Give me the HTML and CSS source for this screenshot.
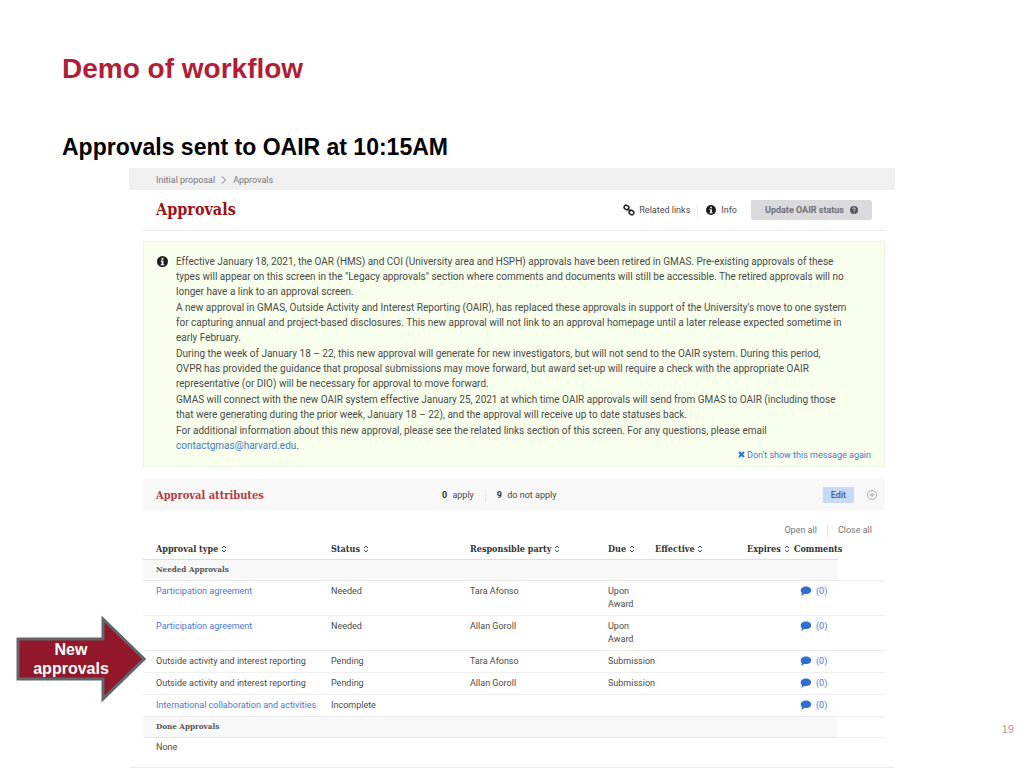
FILE: index.html
```html
<!DOCTYPE html>
<html lang="en">
<head>
    <meta charset="UTF-8">
    <meta name="viewport" content="width=device-width, initial-scale=1.0">
    <title>Demo of workflow</title>
    <link rel="stylesheet" href="styles.css">
</head>
<body>
    <svg class="sprite" aria-hidden="true">
        <symbol id="info" viewBox="0 0 12 12">
            <circle cx="6" cy="6" r="6" fill="#1c1c1c"/>
            <path d="M5 2h2v2H5zM4 5h3v4h1v1H4V9h1V6H4z" fill="#fff"/>
        </symbol>
        <symbol id="sort" viewBox="0 0 6 8">
            <path d="M1 3l2-2 2 2M1 5l2 2 2-2" fill="none" stroke="#3f5560"/>
        </symbol>
        <symbol id="comment" viewBox="0 0 12 10">
            <path d="M6 0.5c3 0 5.2 1.7 5.2 3.8S9 8.100 6 8.100c-.6 0-1.200-.1-1.700-.2C3.400 8.800 2.200 9.400.9 9.500c.6-.6 1-1.400 1.100-2.300C1 6.500.7 5.500.7 4.300.7 2.200 3 .5 6 .5z" fill="#2f6fd0"/>
        </symbol>
    </svg>

    <main class="slide">
        <h1>Demo of workflow</h1>
        <h2>Approvals sent to OAIR at 10:15AM</h2>

        <div class="screen">
            <nav class="breadcrumb">
                <span>Initial proposal</span>
                <svg width="6" height="8" viewBox="0 0 6 8"><path d="M1 0.5l3.500 3.500L1 7.500" fill="none" stroke="#777"/></svg>
                <span>Approvals</span>
            </nav>

            <div class="page">
                <header class="page-header">
                    <h3>Approvals</h3>
                    <a href="#" class="tool">
                        <svg width="12" height="12" viewBox="0 0 12 12" fill="none" stroke="#222" stroke-width="1.500">
                            <rect x="1" y="1.500" width="5" height="4" rx="2" transform="rotate(35 3.500 3.500)"/>
                            <rect x="6" y="6.500" width="5" height="4" rx="2" transform="rotate(35 8.500 8.500)"/>
                            <path d="M4.500 4.500l3 3"/>
                        </svg>
                        Related links
                    </a>
                    <a href="#" class="tool info-tool">
                        <svg width="10" height="10"><use href="#info"/></svg>
                        Info
                    </a>
                    <button class="update">
                        Update OAIR status
                        <svg width="8" height="8" viewBox="0 0 8 8">
                            <circle cx="4" cy="4" r="4" fill="#555"/>
                            <path d="M2.700 3c0-1.700 2.700-1.600 2.600-.1C5.300 3.800 4 3.800 4 4.800M4 5.500v1" fill="none" stroke="#dcdcde"/>
                        </svg>
                    </button>
                </header>

                <section class="notice">
                    <svg width="11" height="11"><use href="#info"/></svg>
                    <div class="notice-text">
                        <p>Effective January 18, 2021, the OAR (HMS) and COI (University area and HSPH) approvals have been retired in GMAS. Pre-existing approvals of these types will appear on this screen in the "Legacy approvals" section where comments and documents will still be accessible. The retired approvals will no longer have a link to an approval screen.</p>
                        <p>A new approval in GMAS, Outside Activity and Interest Reporting (OAIR), has replaced these approvals in support of the University's move to one system for capturing annual and project-based disclosures. This new approval will not link to an approval homepage until a later release expected sometime in early February.</p>
                        <p>During the week of January 18 – 22, this new approval will generate for new investigators, but will not send to the OAIR system. During this period, OVPR has provided the guidance that proposal submissions may move forward, but award set-up will require a check with the appropriate OAIR representative (or DIO) will be necessary for approval to move forward.</p>
                        <p>GMAS will connect with the new OAIR system effective January 25, 2021 at which time OAIR approvals will send from GMAS to OAIR (including those that were generating during the prior week, January 18 – 22), and the approval will receive up to date statuses back.</p>
                        <p>For additional information about this new approval, please see the related links section of this screen. For any questions, please email <a href="mailto:contactgmas@harvard.edu">contactgmas@harvard.edu</a>.</p>
                    </div>
                    <a href="#" class="dismiss">
                        <svg width="7" height="7" viewBox="0 0 7 7"><path d="M1 1l5 5M6 1L1 6" stroke="#2f6fd0" stroke-width="2"/></svg>
                        Don't show this message again
                    </a>
                </section>

                <section class="attributes">
                    <h4>Approval attributes</h4>
                    <span class="count"><b>0</b> apply</span>
                    <span class="count"><b>9</b> do not apply</span>
                    <button class="edit">Edit</button>
                    <button class="expand" aria-label="Expand">
                        <svg width="10" height="10" viewBox="0 0 10 10" fill="none" stroke="#aaa"><circle cx="5" cy="5" r="4.500"/><path d="M5 2.500v5M2.500 5h5"/></svg>
                    </button>
                </section>

                <div class="toggles">
                    <a href="#">Open all</a>
                    <a href="#">Close all</a>
                </div>

                <table>
                    <colgroup>
                        <col>
                        <col class="col-status">
                        <col class="col-party">
                        <col class="col-due">
                        <col class="col-effective">
                        <col class="col-expires">
                        <col class="col-comments">
                        <col class="col-rest">
                    </colgroup>
                    <thead>
                        <tr>
                            <th>Approval type <svg width="6" height="8"><use href="#sort"/></svg></th>
                            <th>Status <svg width="6" height="8"><use href="#sort"/></svg></th>
                            <th>Responsible party <svg width="6" height="8"><use href="#sort"/></svg></th>
                            <th>Due <svg width="6" height="8"><use href="#sort"/></svg></th>
                            <th>Effective <svg width="6" height="8"><use href="#sort"/></svg></th>
                            <th>Expires <svg width="6" height="8"><use href="#sort"/></svg></th>
                            <th>Comments</th>
                            <td></td>
                        </tr>
                    </thead>
                    <tbody>
                        <tr class="group"><th colspan="7">Needed Approvals</th><td></td></tr>
                        <tr>
                            <td><a href="#">Participation agreement</a></td><td>Needed</td><td>Tara Afonso</td><td class="wrap">Upon Award</td><td></td><td></td>
                            <td class="comments"><a href="#"><svg width="12" height="10"><use href="#comment"/></svg>(0)</a></td><td></td>
                        </tr>
                        <tr>
                            <td><a href="#">Participation agreement</a></td><td>Needed</td><td>Allan Goroll</td><td class="wrap">Upon Award</td><td></td><td></td>
                            <td class="comments"><a href="#"><svg width="12" height="10"><use href="#comment"/></svg>(0)</a></td><td></td>
                        </tr>
                        <tr>
                            <td>Outside activity and interest reporting</td><td>Pending</td><td>Tara Afonso</td><td>Submission</td><td></td><td></td>
                            <td class="comments"><a href="#"><svg width="12" height="10"><use href="#comment"/></svg>(0)</a></td><td></td>
                        </tr>
                        <tr>
                            <td>Outside activity and interest reporting</td><td>Pending</td><td>Allan Goroll</td><td>Submission</td><td></td><td></td>
                            <td class="comments"><a href="#"><svg width="12" height="10"><use href="#comment"/></svg>(0)</a></td><td></td>
                        </tr>
                        <tr>
                            <td><a href="#">International collaboration and activities</a></td><td>Incomplete</td><td></td><td></td><td></td><td></td>
                            <td class="comments"><a href="#"><svg width="12" height="10"><use href="#comment"/></svg>(0)</a></td><td></td>
                        </tr>
                        <tr class="group"><th colspan="7">Done Approvals</th><td></td></tr>
                        <tr class="none"><td colspan="8">None</td></tr>
                    </tbody>
                </table>
            </div>
        </div>

        <div class="callout">
            <svg width="130" height="90" viewBox="0 0 130 90"><path d="M2 24h85V4l41 40-41 40V64H2z" fill="#93172b" stroke="#62666a" stroke-width="3"/></svg>
            <span>New approvals</span>
        </div>
        <div class="slide-number">19</div>
    </main>
</body>
</html>
```

FILE: styles.css
```css
* {
    box-sizing: border-box;
}

body {
    margin: 0;
    background-color: #fff;
    color: #4a4a4a;
    font-family: Roboto, "Liberation Sans", sans-serif;
    font-size: 9px;
    line-height: 13px;
}

h1, h2, h3, h4, p {
    margin: 0;
}

a {
    color: #4a78cf;
    text-decoration: none;
}

button {
    border: none;
    font-family: inherit;
    font-size: inherit;
    line-height: inherit;
    cursor: pointer;
}

.sprite {
    display: none;
}

.slide {
    position: relative;
    min-height: 100vh;
    padding-top: 52px;
}

h1, h2 {
    padding-left: 62px;
    font-family: "Liberation Sans", Arial, sans-serif;
}

h1 {
    color: #b01e38;
    font-size: 28px;
    line-height: 34px;
    margin-bottom: 46px;
}

h2 {
    color: #000;
    font-size: 23px;
    line-height: 30px;
    margin-bottom: 6px;
}

.screen {
    margin: 0 129px;
    border-bottom: 1px solid #ebebeb;
}

.breadcrumb {
    display: flex;
    align-items: center;
    gap: 6px;
    height: 22px;
    padding: 2px 27px 0;
    background-color: #f0f0f0;
    color: #777;
}

.page {
    margin: 0 10px 0 14px;
}

.page-header {
    display: flex;
    align-items: center;
    height: 41px;
    padding: 0 13px;
    border-bottom: 1px solid #ebebeb;
}

h3, h4, th {
    font-family: "Roboto Slab", "DejaVu Serif Condensed", "DejaVu Serif", serif;
    font-weight: bold;
}

h3 {
    flex: 1;
    color: #981212;
    font-size: 16px;
    line-height: 22px;
}

.tool {
    display: flex;
    align-items: center;
    gap: 4px;
    color: #4a4a4a;
}

.info-tool {
    gap: 5px;
    margin: 0 14px 0 7px;
    padding-left: 8px;
    border-left: 1px solid #ebebeb;
}

.update {
    display: flex;
    align-items: center;
    gap: 6px;
    height: 20px;
    padding: 0 14px;
    border-radius: 2px;
    background-color: #dadade;
    color: #707074;
    font-weight: bold;
}

.notice {
    position: relative;
    display: flex;
    align-items: flex-start;
    gap: 8px;
    margin-top: 10px;
    padding: 12px 36px 13px 13px;
    border: 1px solid #edf5e2;
    background-color: #f8ffed;
    font-size: 10px;
    line-height: 15px;
}

.notice > svg {
    flex: none;
    margin-top: 2px;
}

.notice p + p {
    margin-top: 1px;
}

.dismiss {
    position: absolute;
    right: 13px;
    bottom: 3px;
    font-size: 9px;
}

.attributes {
    display: flex;
    align-items: center;
    height: 32px;
    margin-top: 12px;
    padding: 0 8px 0 13px;
    background-color: #f8f8f8;
}

h4 {
    width: 286px;
    color: #b23b44;
    font-size: 11px;
}

.count + .count {
    margin-left: 11px;
    padding-left: 11px;
    border-left: 1px solid #e4e4e4;
}

.count b {
    margin-right: 3px;
    color: #333;
}

.edit {
    height: 16px;
    margin-left: auto;
    padding: 0 8px;
    background-color: #c6d9f7;
    color: #3b5f9f;
    font-weight: 500;
}

.expand {
    display: flex;
    margin-left: 13px;
    padding: 0;
    background: none;
}

.toggles {
    display: flex;
    justify-content: flex-end;
    margin-top: 13px;
    padding-right: 13px;
}

.toggles a {
    color: #777;
}

.toggles a + a {
    margin-left: 10px;
    padding-left: 10px;
    border-left: 1px solid #e4e4e4;
}

table {
    width: 100%;
    margin-top: 2px;
    border-collapse: collapse;
    table-layout: fixed;
}

.col-status {
    width: 139px;
}

.col-party {
    width: 138px;
}

.col-due, .col-expires, .col-rest {
    width: 47px;
}

.col-effective {
    width: 92px;
}

.col-comments {
    width: 44px;
}

th, td {
    padding: 0;
    text-align: left;
    vertical-align: top;
    white-space: nowrap;
}

thead th {
    height: 20px;
    padding-top: 4px;
    color: #333;
    font-size: 9px;
}

th svg {
    vertical-align: -1px;
}

tbody td {
    padding: 4px 0;
    border-bottom: 1px solid #efefef;
}

tbody .wrap {
    white-space: normal;
}

tr:has(.wrap) td {
    height: 35px;
}

.group th {
    padding: 3px 0 4px;
    border-top: 1px solid #dedede;
    border-bottom: 1px solid #e6e6e6;
    background-color: #f8f8f8;
    color: #555;
    font-size: 8px;
}

.group td {
    padding: 0;
}

tr > :first-child {
    padding-left: 13px;
}

.comments a {
    display: flex;
    align-items: center;
    gap: 4px;
    padding-left: 6px;
}

.none td {
    height: 30px;
    padding-top: 3px;
    border-bottom: none;
}

.callout {
    position: absolute;
    left: 16px;
    top: 615px;
    width: 130px;
}

.callout span {
    position: absolute;
    left: 15px;
    top: 25px;
    width: 80px;
    color: #fff;
    font-family: "Liberation Sans", Arial, sans-serif;
    font-size: 16px;
    font-weight: bold;
    line-height: 19px;
    text-align: center;
}

.slide-number {
    position: absolute;
    right: 10px;
    top: 723px;
    color: #a0a0a0;
    font-family: "Liberation Sans", Arial, sans-serif;
    font-size: 11px;
}
```
